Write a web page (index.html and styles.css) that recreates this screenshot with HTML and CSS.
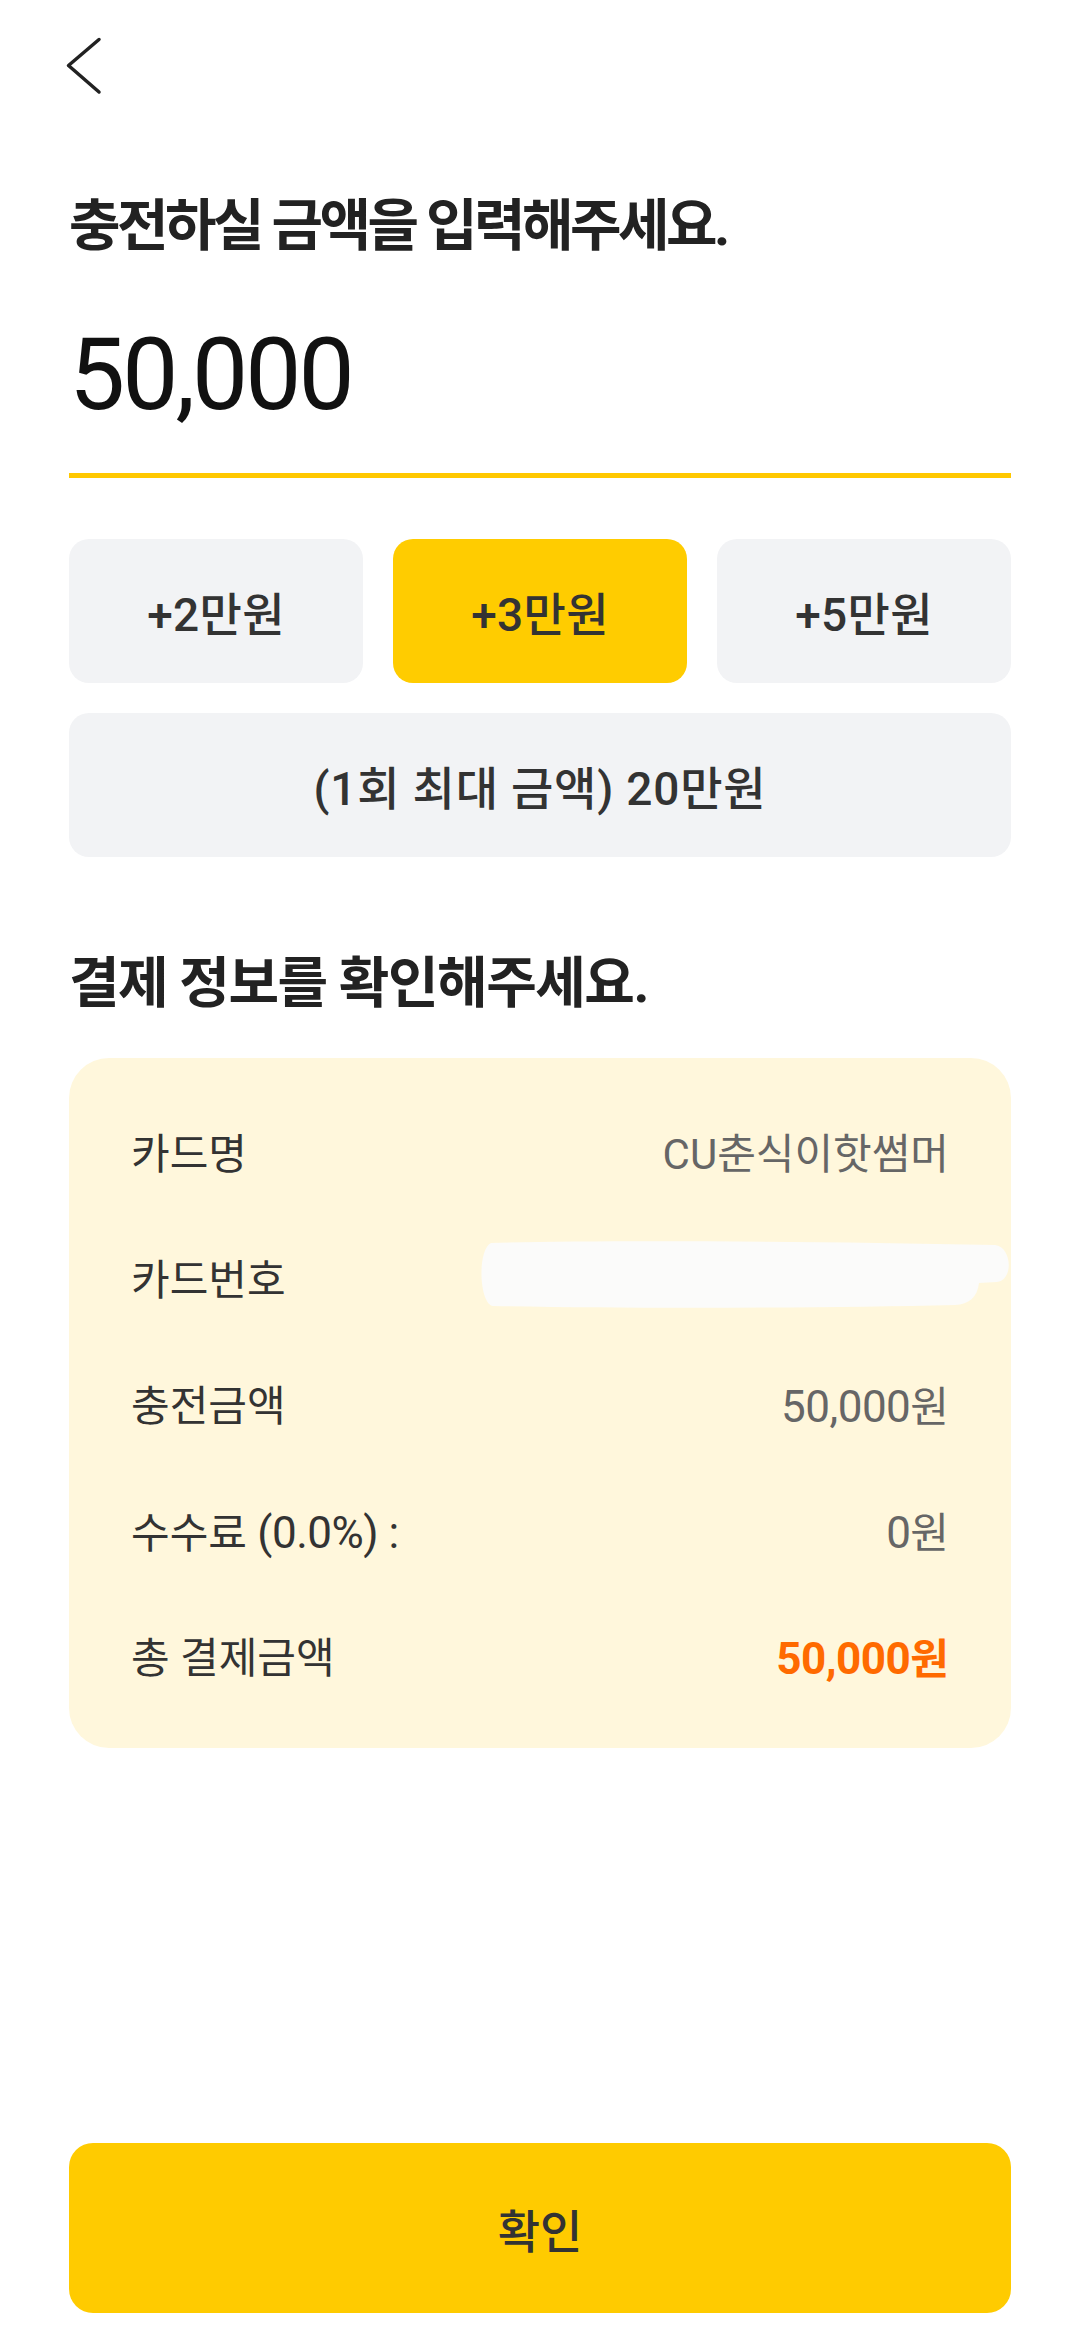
FILE: index.html
```html
<!DOCTYPE html>
<html lang="ko">
<head>
<meta charset="utf-8">
<title>충전</title>
<link rel="stylesheet" href="styles.css">
</head>
<body>
<div class="page">
  <header class="top-bar">
    <button class="back" aria-label="뒤로가기">
      <svg viewBox="0 0 36 58" width="36" height="58"><polyline points="33,2.5 2.5,28.5 33,55" fill="none" stroke="#222" stroke-width="3.5" stroke-linecap="round" stroke-linejoin="round"/></svg>
    </button>
  </header>

  <h1 class="title">충전하실 금액을 입력해주세요.</h1>

  <div class="amount-input"><span class="amount">50,000</span></div>

  <div class="quick-grid">
    <button class="chip">+2만원</button>
    <button class="chip active">+3만원</button>
    <button class="chip">+5만원</button>
    <button class="chip wide">(1회 최대 금액) 20만원</button>
  </div>

  <h2 class="subtitle">결제 정보를 확인해주세요.</h2>

  <section class="card">
    <div class="row"><span class="label">카드명</span><span class="value">CU춘식이핫썸머</span></div>
    <div class="row"><span class="label">카드번호</span><span class="value"></span></div>
    <div class="row"><span class="label">충전금액</span><span class="value"><span class="num">50,000</span>원</span></div>
    <div class="row"><span class="label">수수료 <span class="num">(0.0%) :</span></span><span class="value"><span class="num">0</span>원</span></div>
    <div class="row"><span class="label">총 결제금액</span><span class="value total"><span class="num">50,000</span>원</span></div>
    <svg class="redact" viewBox="0 0 536 72" width="536" height="72" aria-hidden="true"><path d="M14 5 C120 2 320 3 518 7 C535 9 537 42 520 44 L502 45 C500 60 492 66 478 67 C350 70 160 71 16 68 C2 66 0 12 14 5 Z" fill="#FBFBFA"/></svg>
  </section>

  <button class="confirm">확인</button>
</div>
</body>
</html>
```

FILE: styles.css
```css
* { box-sizing: border-box; }

html, body {
  margin: 0;
  padding: 0;
  background: #ffffff;
}

body {
  font-family: Roboto, "Noto Sans CJK KR", sans-serif;
  color: #222;
}

.page {
  height: 2339px;
  padding: 0 69px;
  display: flex;
  flex-direction: column;
}

.top-bar {
  height: 131px;
  flex-shrink: 0;
}

.back {
  display: block;
  width: 36px;
  height: 58px;
  margin: 37px 0 0 -3px;
  padding: 0;
  border: 0;
  background: none;
}

.back svg { display: block; }

.title {
  margin: 60px 0 0;
  font-size: 56px;
  line-height: 70px;
  font-weight: 700;
  letter-spacing: -3.5px;
  color: #222;
}

.amount-input {
  margin-top: 54px;
  padding-bottom: 38px;
  border-bottom: 5px solid #FFC800;
}

.amount {
  display: block;
  font-size: 100px;
  line-height: 120px;
  font-weight: 400;
  letter-spacing: -3px;
  color: #111;
}

.quick-grid {
  margin-top: 61px;
  display: grid;
  grid-template-columns: repeat(3, 1fr);
  gap: 30px;
}

.chip {
  height: 144px;
  border: 0;
  border-radius: 20px;
  background: #F2F3F5;
  font-family: Roboto, "Noto Sans CJK KR", sans-serif;
  font-size: 46px;
  font-weight: 500;
  letter-spacing: 0.3px;
  color: #333;
  padding: 0;
}

.chip.active { background: #FFCC00; }

.chip.wide {
  grid-column: 1 / -1;
  letter-spacing: 0.8px;
}

.subtitle {
  margin: 94px 0 0;
  font-size: 55px;
  line-height: 64px;
  font-weight: 700;
  letter-spacing: -1.5px;
  color: #222;
}

.card {
  position: relative;
  margin-top: 43px;
  padding: 34px 62px 26px;
  border-radius: 40px;
  background: #FFF7DC;
}

.row {
  height: 126px;
  display: flex;
  align-items: center;
  justify-content: space-between;
  font-size: 42px;
  line-height: 50px;
  letter-spacing: 0;
}

.label { color: #333; }

.value { color: #666; }

.num {
  font-size: 44px;
  letter-spacing: -0.5px;
}

.value.total {
  color: #FF6A00;
  font-weight: 700;
}

.redact {
  position: absolute;
  left: 408px;
  top: 180px;
}

.confirm {
  margin-top: auto;
  margin-bottom: 26px;
  height: 170px;
  flex-shrink: 0;
  border: 0;
  border-radius: 24px;
  background: #FFCB00;
  font-family: Roboto, "Noto Sans CJK KR", sans-serif;
  font-size: 46px;
  font-weight: 500;
  letter-spacing: 0;
  color: #333;
}
```
